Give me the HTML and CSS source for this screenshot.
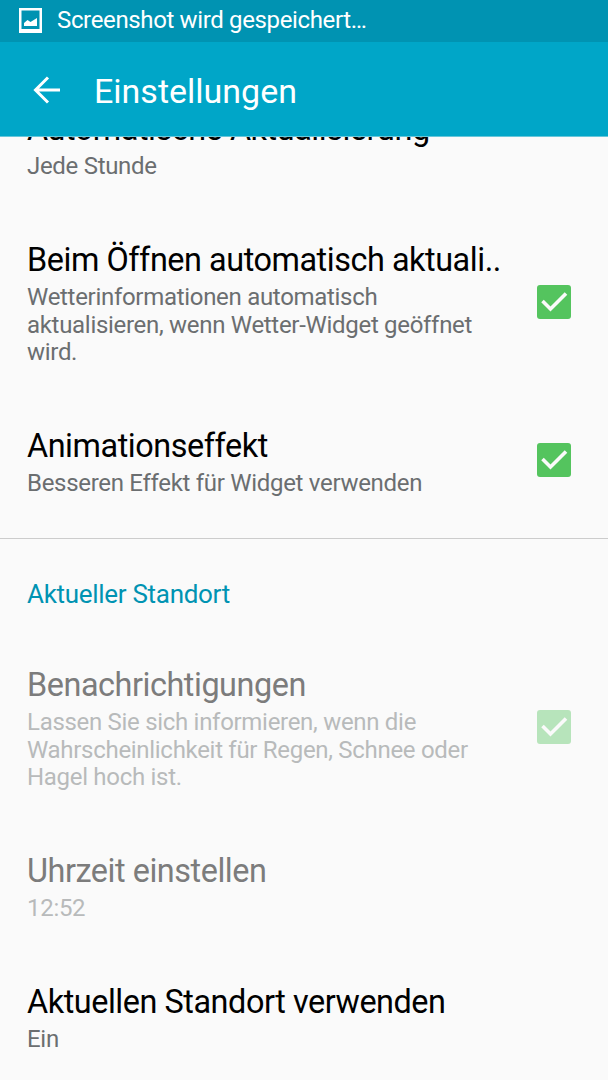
FILE: index.html
```html
<!DOCTYPE html>
<html lang="de">
<head>
<meta charset="utf-8">
<title>Einstellungen</title>
<link rel="stylesheet" href="styles.css">
</head>
<body>
<div class="screen">
  <div class="status-bar">
    <svg class="picture-icon" viewBox="0 0 23 25"><path fill-rule="evenodd" d="M0 0h23v25H0zM2.500 2.500v18.500h18V2.500z" fill="#fff"/><path d="M5 18V15l3.500-3 3 2 6.500-4V18z" fill="#fff"/></svg>
    <span class="status-text">Screenshot wird gespeichert…</span>
  </div>
  <header class="app-bar">
    <svg class="back-icon" viewBox="0 0 28 28"><path d="M15 1.500L2.500 14 15 26.500M2.500 14H27" fill="none" stroke="#fff" stroke-width="3"/></svg>
    <h1 class="app-title">Einstellungen</h1>
  </header>
  <main class="list">
    <section class="item item-clipped">
      <div class="copy"><h2 class="title">Automatische Aktualisierung</h2><p class="summary">Jede Stunde</p></div>
    </section>
    <section class="item item-tall">
      <div class="copy"><h2 class="title">Beim Öffnen automatisch aktuali..</h2><p class="summary">Wetterinformationen automatisch<br>aktualisieren, wenn Wetter-Widget geöffnet<br>wird.</p></div>
      <svg class="check" viewBox="0 0 34 34"><rect width="34" height="34" rx="3" fill="#54c45e"/><path d="M5.500 16l8 8L29 8.500" fill="none" stroke="#fafafa" stroke-width="3.600"/></svg>
    </section>
    <section class="item item-animation">
      <div class="copy"><h2 class="title">Animationseffekt</h2><p class="summary">Besseren Effekt für Widget verwenden</p></div>
      <svg class="check" viewBox="0 0 34 34"><rect width="34" height="34" rx="3" fill="#54c45e"/><path d="M5.500 16l8 8L29 8.500" fill="none" stroke="#fafafa" stroke-width="3.600"/></svg>
    </section>
    <h3 class="category">Aktueller Standort</h3>
    <section class="item item-tall disabled">
      <div class="copy"><h2 class="title">Benachrichtigungen</h2><p class="summary">Lassen Sie sich informieren, wenn die<br>Wahrscheinlichkeit für Regen, Schnee oder<br>Hagel hoch ist.</p></div>
      <svg class="check" viewBox="0 0 34 34"><rect width="34" height="34" rx="3" fill="#54c45e"/><path d="M5.500 16l8 8L29 8.500" fill="none" stroke="#fafafa" stroke-width="3.600"/></svg>
    </section>
    <section class="item item-time disabled">
      <div class="copy"><h2 class="title">Uhrzeit einstellen</h2><p class="summary">12:52</p></div>
    </section>
    <section class="item item-location">
      <div class="copy"><h2 class="title">Aktuellen Standort verwenden</h2><p class="summary">Ein</p></div>
    </section>
  </main>
</div>
</body>
</html>
```
FILE: styles.css
```css
* { box-sizing: border-box; }
body { margin: 0; font-family: Roboto, sans-serif; background: #fafafa; }
h1, h2, h3, p { margin: 0; font-weight: 400; white-space: nowrap; }
svg { display: block; flex: none; }
.screen { width: 608px; height: 1080px; overflow: hidden; display: flex; flex-direction: column; }
.status-bar { height: 42px; flex: none; background: #0093b2; display: flex; padding: 7px 0 0 19px; color: #fff; }
.picture-icon { width: 23px; height: 25px; margin-top: 1px; }
.status-text { margin-left: 15px; font-size: 24px; line-height: 26px; font-weight: 400; letter-spacing: -.36px; }
.app-bar { height: 94px; flex: none; background: #00a6c8; color: #fff; display: flex; align-items: center; padding: 1px 0 0 33px; }
.back-icon { width: 28px; height: 28px; }
.app-title { margin: 3px 0 0 33px; font-size: 34px; line-height: 40px; }
.list { flex: 1; min-height: 0; overflow: hidden; border-top: 1px solid #66c6da; }
.item { display: flex; align-items: center; justify-content: space-between; padding: 0 37px 0 27px; }
.item-clipped { height: 102px; align-items: flex-start; }
.item-clipped .copy { margin-top: -31px; }
.copy { padding-top: 4px; }
.title { font-size: 32.4px; line-height: 38px; color: #000; letter-spacing: -.45px; }
.summary { margin-top: 5px; font-size: 24px; line-height: 27.5px; color: #6b6e70; letter-spacing: -.3px; }
.check { width: 34px; height: 34px; }
.item-tall { height: 125px; }
.item-tall .copy { padding-top: 5px; }
.item-animation { height: 175px; padding-top: 18px; border-bottom: 1px solid #ccc; }
.category { padding: 39px 27px 0; height: 125px; font-size: 26px; line-height: 32px; color: #0093b2; letter-spacing: -.3px; }
.item-time { height: 193px; }
.item-location { height: 68px; }
.disabled .title { color: #7c7c7c; }
.disabled .summary { color: #b8babb; }
.disabled .check { opacity: .4; }
```
